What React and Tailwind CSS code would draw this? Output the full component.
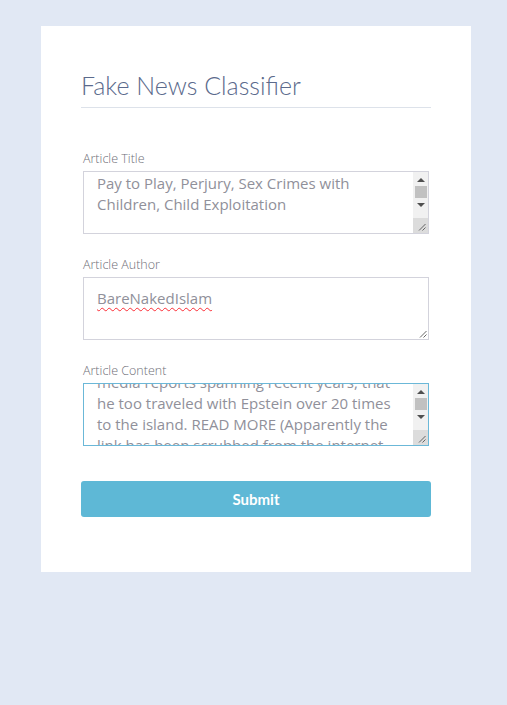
import { useEffect, useRef } from 'react'

const font = { fontFamily: "Lato, 'Open Sans', sans-serif" }
const fieldFont = { fontFamily: "'Open Sans', Lato, sans-serif" }

const contentText =
  'Bill Clinton, it has been noted in multiple media reports spanning recent years, that he too traveled with Epstein over 20 times to the island. READ MORE (Apparently the link has been scrubbed from the internet, but the story is still out there.)'

function Grip() {
  return (
    <svg width="8" height="8" viewBox="0 0 8 8" className="absolute right-[2px] bottom-[2px]">
      <path d="M1 7.5 L7.5 1 M4.5 7.5 L7.5 4.5" stroke="#555" strokeWidth="0.9" fill="none" />
    </svg>
  )
}

function FakeScrollbar() {
  return (
    <div className="absolute right-[1px] top-[1px] bottom-[1px] w-[15px] flex flex-col bg-[#f1f1f1] pointer-events-none">
      <div className="flex-1 flex flex-col items-center pt-[6px]">
        <div className="w-0 h-0 border-l-[4px] border-r-[4px] border-b-[4px] border-l-transparent border-r-transparent border-b-[#505050]" />
        <div className="mt-[4px] w-[12px] h-[12px] bg-[#c1c1c1]" />
        <div className="mt-[5px] w-0 h-0 border-l-[4px] border-r-[4px] border-t-[4px] border-l-transparent border-r-transparent border-t-[#505050]" />
      </div>
      <div className="relative h-[15px] bg-[#dcdcdc]">
        <Grip />
      </div>
    </div>
  )
}

export default function App() {
  const contentRef = useRef(null)

  useEffect(() => {
    if (contentRef.current) contentRef.current.scrollTop = 34
  }, [])

  const area =
    'block w-[346px] h-[63px] border pl-[13px] text-[15px] leading-[21px] text-[#90909a] outline-none resize-none [scrollbar-width:none]'
  const label = 'block text-[12.5px] font-light text-[#6f6f78] leading-[16px] mb-[4px]'

  return (
    <div className="min-h-[705px] w-full bg-[#e1e8f4] pt-[26px]" style={font}>
      <div className="ml-[41px] w-[430px] h-[546px] bg-white px-[40px] pt-[44px]">
        <h1 className="text-[25px] font-light text-[#5b6a8c] leading-[30px] pb-[7px] border-b border-[#dde2ea]">
          Fake News Classifier
        </h1>

        <div className="px-[2px] pt-[43px]" style={fieldFont}>
          <label className={label}>Article Title</label>
          <div className="relative w-[346px]">
            <textarea
              defaultValue={'Pay to Play, Perjury, Sex Crimes with Children, Child Exploitation\n\n'}
              className={area + ' border-[#d3d3dc] pr-[28px] py-[1px] overflow-y-scroll'}
              style={fieldFont}
            />
            <FakeScrollbar />
          </div>

          <label className={label + ' mt-[23px]'}>Article Author</label>
          <div className="relative w-[346px]">
            <textarea
              defaultValue="BareNakedIslam"
              className={area + ' border-[#d3d3dc] pr-[13px] pt-[10px] overflow-hidden underline decoration-wavy decoration-red-500 decoration-[1px] underline-offset-[3px]'}
              style={fieldFont}
            />
            <Grip />
          </div>

          <label className={label + ' mt-[23px]'}>Article Content</label>
          <div className="relative w-[346px]">
            <textarea
              ref={contentRef}
              defaultValue={contentText}
              className={area + ' border-[#6bb8d8] pr-[28px] py-[1px] overflow-y-scroll'}
              style={fieldFont}
            />
            <FakeScrollbar />
          </div>
        </div>

        <button className="mt-[35px] w-[350px] h-[36px] rounded-[3px] bg-[#5eb8d6] text-white text-[15px] font-bold">
          Submit
        </button>
      </div>
    </div>
  )
}
